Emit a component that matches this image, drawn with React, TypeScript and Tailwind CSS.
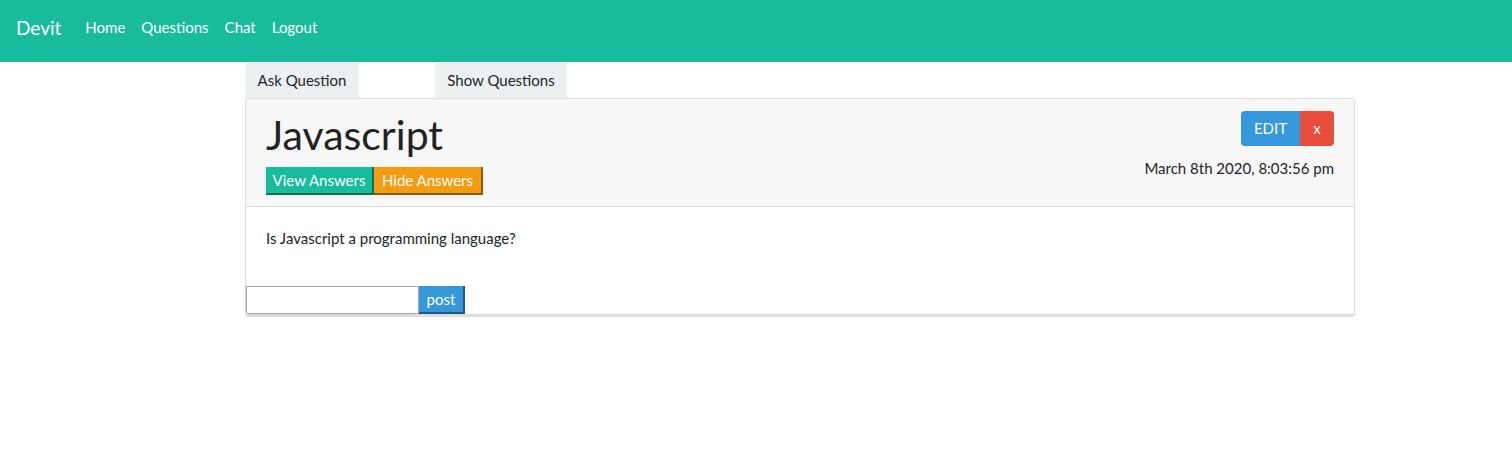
import React, { useState } from 'react';

const App: React.FC = () => {
  const [answer, setAnswer] = useState('');

  return (
    <div className="min-h-[465px] bg-white text-[15px] text-[#212529]" style={{ fontFamily: 'Lato, "Open Sans", sans-serif' }}>
      <nav className="h-[62px] bg-[#18bc9c] flex items-center px-4 pb-[8px]">
        <a className="text-white text-[19px] mr-[24px] leading-none">Devit</a>
        <div className="flex gap-4 text-white text-[15px]">
          <a>Home</a>
          <a>Questions</a>
          <a>Chat</a>
          <a>Logout</a>
        </div>
      </nav>

      <div className="ml-[245px] w-[1110px] pt-[1px]">
        <div className="flex">
          <button className="h-[35px] w-[114px] bg-[#ecf0f1] text-[15px] text-[#212529]">Ask Question</button>
          <button className="h-[35px] w-[132px] ml-[76px] bg-[#ecf0f1] text-[15px] text-[#212529]">Show Questions</button>
        </div>

        <div className="border border-[#dcdcdc] rounded-[3px] shadow-[0_2px_1px_#dddddd] overflow-hidden">
          <div className="bg-[#f7f7f7] border-b border-[#dcdcdc] px-5 pt-[12px] pb-[11px] flex justify-between">
            <div>
              <h1 className="text-[41px] leading-[48px] font-normal text-[#222] mb-[8px]">Javascript</h1>
              <div className="flex">
                <button className="h-[28px] w-[108px] bg-[#18bc9c] text-white text-[15px] border-r-2 border-b-2 border-[#0e6e5b]">View Answers</button>
                <button className="h-[28px] w-[109px] bg-[#f39c12] text-white text-[15px] border-r-2 border-b-2 border-[#8c5a0a]">Hide Answers</button>
              </div>
            </div>
            <div className="flex flex-col items-end">
              <div className="flex">
                <button className="h-[35px] w-[59px] bg-[#3498db] text-white text-[15px] rounded-l-[4px]">EDIT</button>
                <button className="h-[35px] w-[34px] bg-[#e74c3c] text-white text-[15px] rounded-r-[4px]">x</button>
              </div>
              <div className="mt-[11px] text-[15px] text-[#212529]">March 8th 2020, 8:03:56 pm</div>
            </div>
          </div>

          <div className="px-5 pt-5 pb-5">
            <p className="leading-[22.5px] mb-4">Is Javascript a programming language?</p>
          </div>

          <div className="flex">
            <input
              value={answer}
              onChange={(e) => setAnswer(e.target.value)}
              className="h-[28px] w-[173px] border border-[#a9a9a9] bg-white outline-none px-1"
            />
            <button className="h-[28px] w-[46px] bg-[#3498db] text-white text-[15px] pt-[2px] border-r-2 border-b-2 border-[#1d5a82]">post</button>
          </div>
        </div>
      </div>
    </div>
  );
};

export default App;
